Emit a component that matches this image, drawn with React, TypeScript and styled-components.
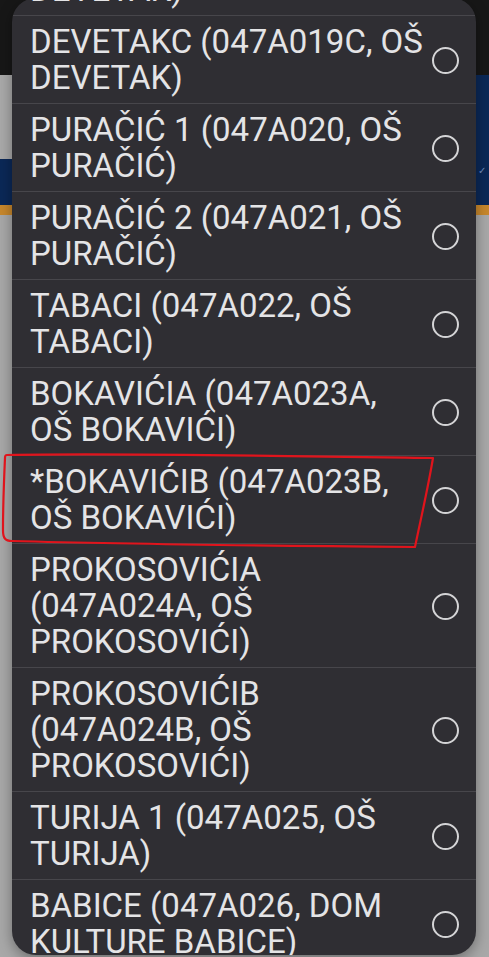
import styled, { createGlobalStyle } from 'styled-components'

const GlobalStyle = createGlobalStyle`
  html, body {
    margin: 0;
    padding: 0;
    background: #a8a8a8;
  }
  * {
    box-sizing: border-box;
  }
`

interface Option {
  label: string;
}

const options: Option[] = [
  { label: 'DEVETAKB (047A019B, OŠ DEVETAK)' },
  { label: 'DEVETAKC (047A019C, OŠ DEVETAK)' },
  { label: 'PURAČIĆ 1 (047A020, OŠ PURAČIĆ)' },
  { label: 'PURAČIĆ 2 (047A021, OŠ PURAČIĆ)' },
  { label: 'TABACI (047A022, OŠ TABACI)' },
  { label: 'BOKAVIĆIA (047A023A, OŠ BOKAVIĆI)' },
  { label: '*BOKAVIĆIB (047A023B, OŠ BOKAVIĆI)' },
  { label: 'PROKOSOVIĆIA (047A024A, OŠ PROKOSOVIĆI)' },
  { label: 'PROKOSOVIĆIB (047A024B, OŠ PROKOSOVIĆI)' },
  { label: 'TURIJA 1 (047A025, OŠ TURIJA)' },
  { label: 'BABICE (047A026, DOM KULTURE BABICE)' },
  { label: 'BANOVIĆI SELO (047A027, OŠ BANOVIĆI SELO)' },
]

const App = () => {
  return (
    <>
      <GlobalStyle />
      <Page>
        <Backdrop>
          <StatusBar />
          <Header>
            <SearchBox />
            <Tick>✓</Tick>
          </Header>
          <Stripe />
        </Backdrop>

        <Dialog>
          <List>
            {options.map((opt, idx) => (
              <Row key={idx}>
                <Label>{opt.label}</Label>
                <Radio />
              </Row>
            ))}
          </List>
        </Dialog>

        <Marker viewBox="0 0 489 957" width="489" height="957">
          <path
            d="M7 455 C 120 453, 300 456, 433 458 C 428 488, 421 518, 415 547 C 300 546, 120 544, 12 541 C 5 541, 3 538, 3 530 C 3 505, 4 480, 5 458 C 5 455, 6 455, 7 455 Z"
            fill="none"
            stroke="#e0141c"
            strokeWidth="2.2"
            strokeLinejoin="round"
          />
        </Marker>
      </Page>
    </>
  )
}

export default App;

const Page = styled.div`
position: relative;
width: 489px;
height: 957px;
overflow: hidden;
background: #a8a8a8;
font-family: Roboto, "Noto Sans", sans-serif;
`

const Backdrop = styled.div`
display: flex;
flex-direction: column;
`

const StatusBar = styled.div`
height: 75px;
background: #171717;
`

const Header = styled.div`
position: relative;
height: 130px;
background: #0b2857;
display: flex;
align-items: flex-start;
`

const SearchBox = styled.div`
width: 120px;
height: 84px;
background: #a9a9a9;
border-bottom-right-radius: 10px;
`

const Tick = styled.span`
position: absolute;
right: 3px;
top: 90px;
font-size: 10px;
color: #6f8fc0;
`

const Stripe = styled.div`
height: 10px;
background: #c7872c;
`

const Dialog = styled.div`
position: absolute;
left: 12px;
top: -2px;
width: 464px;
height: 957px;
background: #2f2e33;
border-radius: 24px;
overflow: hidden;
box-shadow: 0 4px 14px rgba(0, 0, 0, 0.35);
`

const List = styled.div`
margin-top: -70px;
display: flex;
flex-direction: column;
`

const Row = styled.div`
display: flex;
align-items: center;
gap: 8px;
padding: 8px 17px 7px 18px;
border-bottom: 1px solid #47464b;
`

const Label = styled.div`
flex: 1;
font-size: 33px;
line-height: 36px;
color: #e4e4e6;
`

const Radio = styled.div`
flex: none;
width: 27px;
height: 27px;
border-radius: 50%;
border: 2.5px solid #d4d4d6;
`

const Marker = styled.svg`
position: absolute;
left: 0;
top: 0;
pointer-events: none;
`
